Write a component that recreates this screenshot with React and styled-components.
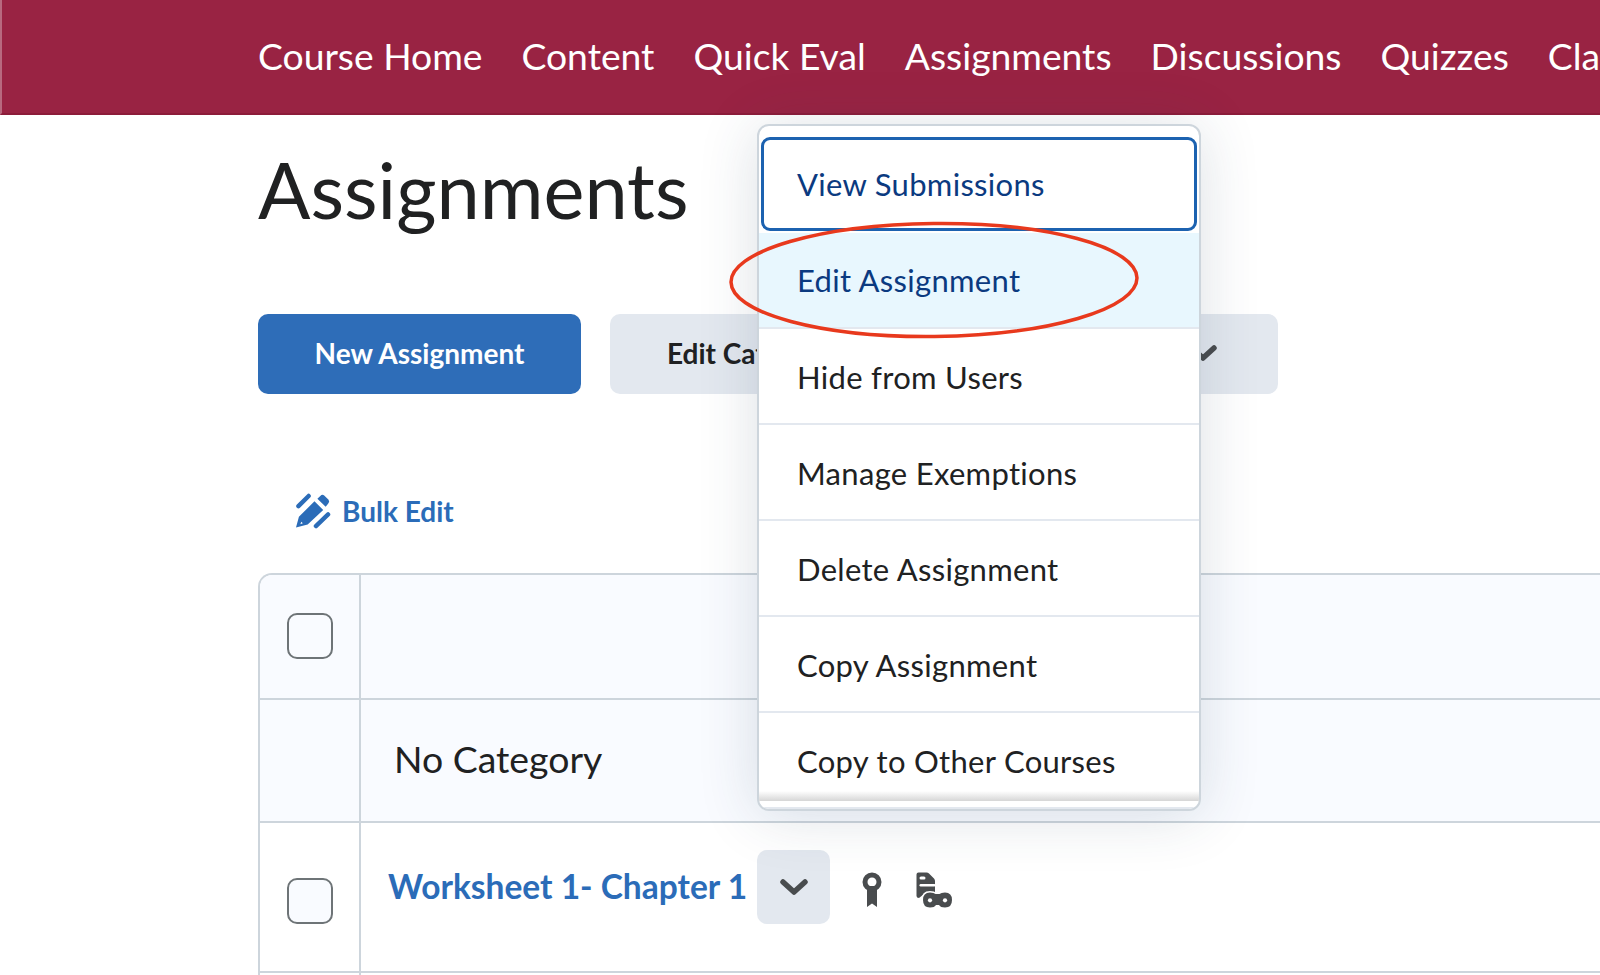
import React from 'react';
import styled, { createGlobalStyle } from 'styled-components';

const navItems = ['Course Home', 'Content', 'Quick Eval', 'Assignments', 'Discussions', 'Quizzes', 'Classlist'];
const menuItems = ['Hide from Users', 'Manage Exemptions', 'Delete Assignment', 'Copy Assignment', 'Copy to Other Courses'];

const binocularsPath = 'M7 28 Q7 20.5 14 20.5 Q18 20.5 19.5 22 H23.5 Q25 20.5 29 20.5 Q36 20.5 36 28 Q36 35.5 29 35.5 Q24.5 35.5 23 33 H20 Q18.5 35.5 14 35.5 Q7 35.5 7 28 Z';

const PencilIcon = () => (
  <svg width="35" height="36" viewBox="0 0 36 36" fill="#2b6cb8">
    <path d="M0 35 L3 24 L19 8 L28 17 L12 32 Z M4.5 31.5 L7 30.5 L5.5 29 Z" fillRule="evenodd" />
    <path d="M2.5 13 L13 2.5" stroke="#2b6cb8" strokeWidth="4.5" strokeLinecap="round" />
    <path d="M20.5 33.5 L33 21.5" stroke="#2b6cb8" strokeWidth="4.5" strokeLinecap="round" />
    <path d="M22 5.5 L25 2.5 Q27 0.5 29 2 L33.5 6.5 Q35 8.5 33 10.5 L30.5 13.5 Z" />
  </svg>
);

const ChevronIcon = () => (
  <svg width="28" height="18" viewBox="0 0 28 18" fill="none" stroke="#494c4e" strokeWidth="5.5" strokeLinecap="round" strokeLinejoin="round">
    <path d="M3 4 L14 14 L25 4" />
  </svg>
);

const MedalIcon = () => (
  <svg width="20" height="36" viewBox="0 0 20 36" fill="#494c4e">
    <path d="M5 14 H15 V35 L10 31.5 L5 35 Z" />
    <path d="M10 0.5 A9.5 9.5 0 1 0 10 19.5 A9.5 9.5 0 1 0 10 0.5 Z M10 5.5 A4.5 4.5 0 1 1 10 14.5 A4.5 4.5 0 1 1 10 5.5 Z" fillRule="evenodd" />
  </svg>
);

const FileBinocularsIcon = () => (
  <svg width="36" height="36" viewBox="0 0 36 36" fill="#494c4e">
    <path d="M2.5 0.5 H10.5 Q12 0.5 13 1.5 L18 6.5 Q19 7.5 19 9 V22 H8 L3 26 Q0.5 26 0.5 24 V2.5 Q0.5 0.5 2.5 0.5 Z" />
    <rect x="3.5" y="4.5" width="6" height="3" rx="1.5" fill="#fff" />
    <rect x="3.5" y="12" width="16" height="2.5" rx="1.2" fill="#fff" />
    <path d={binocularsPath} fill="#fff" stroke="#fff" strokeWidth="3" />
    <path d={binocularsPath} />
    <circle cx="14" cy="28.3" r="2.1" fill="#fff" />
    <circle cx="29" cy="28.3" r="2.1" fill="#fff" />
  </svg>
);

const App = () => (
  <Page>
    <GlobalStyle />
    <TopNav>
      {navItems.map((item) => (
        <NavLink key={item}>{item}</NavLink>
      ))}
    </TopNav>
    <Main>
      <Title>Assignments</Title>
      <ButtonRow>
        <PrimaryButton>New Assignment</PrimaryButton>
        <SecondaryButton $width={300}>Edit Categories</SecondaryButton>
        <SecondaryButton $width={339}>
          More Actions
          <ChevronIcon />
        </SecondaryButton>
      </ButtonRow>
      <BulkEdit>
        <PencilIcon />
        Bulk Edit
      </BulkEdit>
      <Table>
        <Row $height={125} $shaded>
          <CheckCell $lift={2}><Checkbox /></CheckCell>
          <TextCell />
        </Row>
        <Row $height={123} $shaded>
          <CheckCell />
          <TextCell>
            <CategoryName>No Category</CategoryName>
          </TextCell>
        </Row>
        <Row $height={150}>
          <CheckCell $offset={8}><Checkbox $tinted /></CheckCell>
          <AssignmentCell>
            <AssignmentLink>Worksheet 1- Chapter 1</AssignmentLink>
            <ChevronButton><ChevronIcon /></ChevronButton>
            <StatusIcons>
              <MedalIcon />
              <FileBinocularsIcon />
            </StatusIcons>
          </AssignmentCell>
        </Row>
        <Row $height={20}>
          <CheckCell />
          <TextCell />
        </Row>
      </Table>
    </Main>
    <Menu>
      <FocusedItem>View Submissions</FocusedItem>
      <HoverItem>Edit Assignment</HoverItem>
      {menuItems.map((item) => (
        <MenuItem key={item}>{item}</MenuItem>
      ))}
      <ScrollShade />
    </Menu>
    <Annotation width="420" height="124" viewBox="0 0 420 124">
      <ellipse cx="210" cy="62" rx="203" ry="56.5" fill="none" stroke="#e8391d" strokeWidth="3.5" transform="rotate(-0.6 210 62)" />
    </Annotation>
  </Page>
);

const GlobalStyle = createGlobalStyle`
  html, body {
    margin: 0;
    padding: 0;
    background: #fff;
  }
  body {
    font-family: Lato, "Liberation Sans", sans-serif;
  }
`;

const Page = styled('div')`
  height: 975px;
  overflow: hidden;
  position: relative;
  width: 1600px;
`;

const TopNav = styled('nav')`
  align-items: center;
  background: #992343;
  border-bottom: 2px solid #8c1c3a;
  border-left: 2px solid #b8697f;
  box-sizing: border-box;
  display: flex;
  gap: 39px;
  height: 115px;
  padding: 0 0 2px 256px;
  white-space: nowrap;
`;

const NavLink = styled('a')`
  color: #fff;
  font-size: 37.25px;
  line-height: 44px;
`;

const Main = styled('main')`
  padding-left: 258px;
`;

const Title = styled('h1')`
  color: #202122;
  font-size: 77.5px;
  font-weight: 400;
  line-height: 90px;
  margin: 30px 0 79px;
`;

const ButtonRow = styled('div')`
  display: flex;
  gap: 29px;
`;

const PrimaryButton = styled('button')`
  background: #2e6db8;
  border: 0;
  border-radius: 10px;
  color: #fff;
  font-family: inherit;
  font-size: 28px;
  font-weight: 700;
  height: 80px;
  padding: 0 0 2px;
  width: 323px;
`;

const SecondaryButton = styled('button')`
  align-items: center;
  background: #e3e8ef;
  border: 0;
  border-radius: 10px;
  color: #202122;
  display: flex;
  font-family: inherit;
  font-size: 28px;
  font-weight: 700;
  height: 80px;
  justify-content: space-between;
  padding: 0 61px 2px 57px;
  white-space: nowrap;
  width: ${({ $width }) => $width}px;
`;

const BulkEdit = styled('div')`
  align-items: center;
  color: #2b6cb8;
  display: flex;
  font-size: 28px;
  font-weight: 700;
  gap: 11px;
  height: 42px;
  margin: 96px 0 41px 38px;
`;

const Table = styled('div')`
  border-left: 2px solid #cdd5dc;
  border-radius: 14px 0 0 0;
  border-top: 2px solid #cdd5dc;
  overflow: hidden;
`;

const Row = styled('div')`
  background: ${({ $shaded }) => ($shaded ? '#f9fbff' : '#fff')};
  border-bottom: 2px solid #cdd5dc;
  box-sizing: border-box;
  display: flex;
  height: ${({ $height }) => $height}px;
`;

const CheckCell = styled('div')`
  align-items: center;
  border-right: 2px solid #cdd5dc;
  box-sizing: border-box;
  display: flex;
  justify-content: center;
  padding-bottom: ${({ $lift }) => $lift || 0}px;
  padding-top: ${({ $offset }) => $offset || 0}px;
  width: 101px;
`;

const Checkbox = styled('div')`
  background: ${({ $tinted }) => ($tinted ? '#f9fbff' : 'transparent')};
  border: 2px solid #6e7477;
  border-radius: 10px;
  box-sizing: border-box;
  height: 46px;
  width: 46px;
`;

const TextCell = styled('div')`
  align-items: center;
  display: flex;
  flex: 1;
  padding: 0 0 4px 33px;
`;

const CategoryName = styled('span')`
  color: #202122;
  font-size: 37.4px;
`;

const AssignmentCell = styled('div')`
  align-items: flex-start;
  display: flex;
  flex: 1;
  padding: 27px 0 0 27px;
`;

const AssignmentLink = styled('a')`
  color: #2b6cb8;
  font-size: 33.5px;
  font-weight: 700;
  line-height: 72px;
  white-space: nowrap;
`;

const ChevronButton = styled('div')`
  align-items: center;
  background: #e3e8ef;
  border-radius: 10px;
  display: flex;
  height: 74px;
  justify-content: center;
  margin-left: 10px;
  width: 73px;
`;

const StatusIcons = styled('div')`
  align-items: flex-start;
  display: flex;
  gap: 34px;
  margin: 22px 0 0 32px;
`;

const Menu = styled('div')`
  background: #fff;
  border: 2px solid #cdd5dc;
  border-radius: 12px;
  box-shadow: 0 4px 60px rgba(40, 60, 90, 0.16);
  box-sizing: border-box;
  height: 687px;
  left: 757px;
  overflow: hidden;
  padding-top: 11px;
  position: absolute;
  top: 124px;
  width: 444px;
`;

const MenuItem = styled('div')`
  align-items: center;
  border-bottom: 2px solid #e3e8ef;
  box-sizing: border-box;
  color: #202122;
  display: flex;
  font-size: 31px;
  height: 96px;
  letter-spacing: 0.3px;
  padding: 1px 0 0 38px;
`;

const HoverItem = styled(MenuItem)`
  background: #e8f7fe;
  color: #0b3a80;
  padding-top: 0;
`;

const FocusedItem = styled(MenuItem)`
  border: 3px solid #1c62b0;
  border-radius: 9px;
  color: #0b3a80;
  height: 94px;
  margin: 0 2px 2px;
  padding: 0 0 0 33px;
`;

const ScrollShade = styled('div')`
  background: linear-gradient(to bottom, rgba(212, 212, 212, 0), #d6d6d6);
  bottom: 8px;
  height: 10px;
  left: 0;
  position: absolute;
  right: 0;
`;

const Annotation = styled('svg')`
  left: 724px;
  pointer-events: none;
  position: absolute;
  top: 218px;
`;

export default App;
